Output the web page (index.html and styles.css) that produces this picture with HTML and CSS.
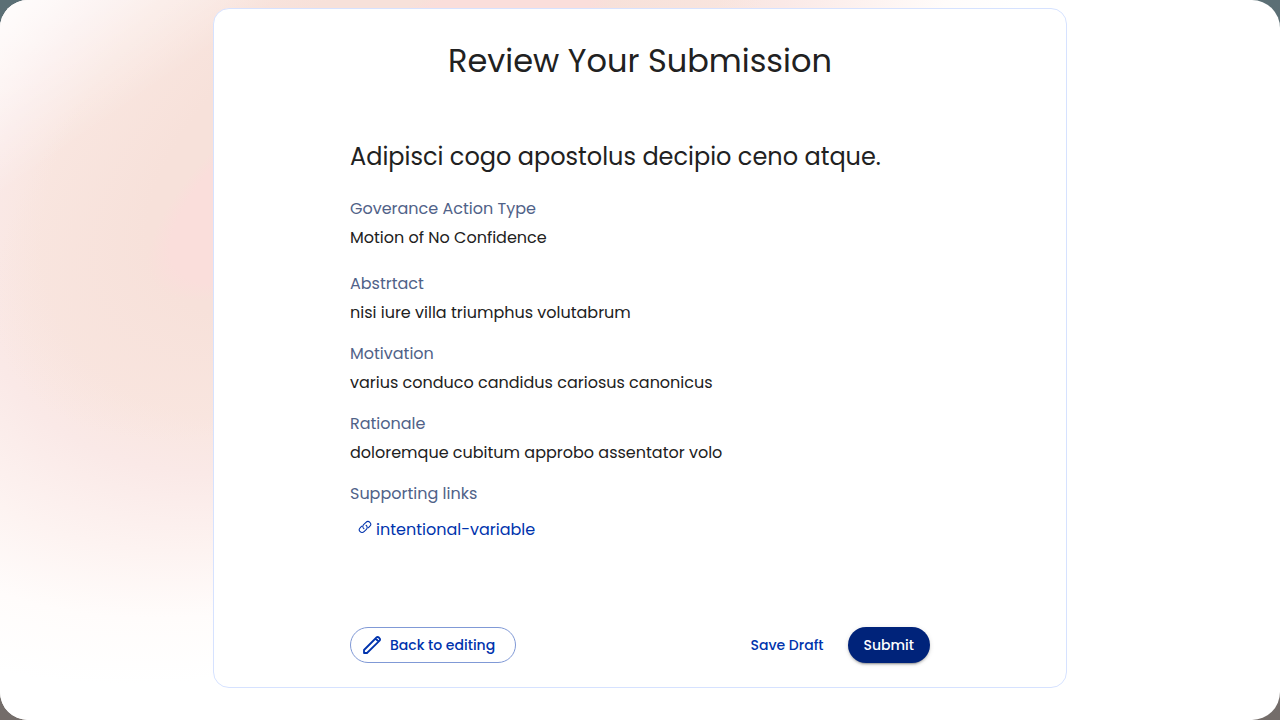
FILE: index.html
```html
<!DOCTYPE html>
<html lang="en">
<head>
<meta charset="utf-8">
<meta name="viewport" content="width=device-width, initial-scale=1">
<title>Review Your Submission</title>
<link rel="stylesheet" href="styles.css">
</head>
<body>
<div class="page">
  <main class="card">
    <h1 class="title">Review Your Submission</h1>
    <div class="content">
      <h2 class="subtitle">Adipisci cogo apostolus decipio ceno atque.</h2>
      <dl class="details">
        <div class="field field-type"><dt>Goverance Action Type</dt><dd>Motion of No Confidence</dd></div>
        <div class="field"><dt>Abstrtact</dt><dd>nisi iure villa triumphus volutabrum</dd></div>
        <div class="field"><dt>Motivation</dt><dd>varius conduco candidus cariosus canonicus</dd></div>
        <div class="field"><dt>Rationale</dt><dd>doloremque cubitum approbo assentator volo</dd></div>
        <div class="field"><dt>Supporting links</dt>
          <dd class="links"><a class="link" href="#"><svg class="link-icon" viewBox="0 0 16 16" aria-hidden="true"><path d="M6.800 10a3 3 0 0 1-.4-4.600l2.700-2.700a3.100 3.100 0 0 1 4.500 4.400l-1.800 1.800M9.200 6a3 3 0 0 1 .4 4.600l-2.700 2.700a3.100 3.100 0 0 1-4.500-4.400l1.800-1.800"/></svg><span>intentional-variable</span></a></dd>
        </div>
      </dl>
      <div class="actions">
        <button class="button outlined" type="button"><svg class="edit-icon" viewBox="0 0 20 20" aria-hidden="true"><path d="M2 18v-3L14.500 2.500a1.600 1.600 0 0 1 2.300 0l.8.8a1.600 1.600 0 0 1 0 2.300L5 18zM13.500 3.500l3 3"/></svg>Back to editing</button>
        <div class="actions-end">
          <button class="button text" type="button">Save Draft</button>
          <button class="button contained" type="submit">Submit</button>
        </div>
      </div>
    </div>
  </main>
</div>
</body>
</html>
```
FILE: styles.css
```css
* { box-sizing: border-box; }
body {
  margin: 0;
  font-family: Poppins, Inter, sans-serif;
  font-size: 16px;
  line-height: 24px;
  color: #212121;
  background: linear-gradient(#5b6f75, #746d6a);
}
.page {
  position: relative;
  overflow: hidden;
  min-height: 100vh;
  padding: 8px 0 32px;
  display: flex;
  justify-content: center;
  align-items: stretch;
  border-radius: 28px;
  background: #fff;
}
/* Tilted pink glow behind the card */
.page::before {
  content: "";
  position: absolute;
  left: -340px;
  top: -330px;
  width: 1440px;
  height: 920px;
  transform: rotate(-34deg);
  background:
    radial-gradient(ellipse 274px 92px at center, #fadedb 90%, rgba(250,222,219,0) 100%),
    radial-gradient(ellipse 440px 228px at center, #f7e1da 60%, rgba(248,225,219,0) 100%),
    radial-gradient(ellipse 720px 460px at center, #f9e6e0 52%, #fae9e7 62%, #fdf3f1 76%, #fffcfb 88%, #fff 100%);
}
/* Fades the glow out towards the top left corner */
.page::after {
  content: "";
  position: absolute;
  inset: 0;
  background: linear-gradient(145deg, rgba(255,255,255,.8), rgba(255,255,255,0) 160px);
}
.card {
  position: relative;
  z-index: 1;
  width: 66.6667%;
  padding: 28px 16px 24px;
  display: flex;
  flex-direction: column;
  align-items: center;
  background: #fff;
  border: 1px solid #d6e2ff;
  border-radius: 16px;
}
.title {
  margin: 0 0 56px;
  font-size: 32px;
  line-height: 48px;
  font-weight: 400;
  text-align: center;
}
.content {
  width: 100%;
  max-width: 580px;
  flex: 1;
  display: flex;
  flex-direction: column;
}
.subtitle {
  margin: 0 0 24px;
  font-size: 24px;
  line-height: 32px;
  font-weight: 400;
}
.details { margin: 0; display: flex; flex-direction: column; gap: 17px; }
.field { display: flex; flex-direction: column; gap: 5px; }
.field-type { margin-bottom: 5px; }
dt { color: #506288; }
dd { margin: 0; }
.links { padding: 6px 8px; }
.link { display: inline-flex; align-items: center; gap: 4px; color: #0033ad; text-decoration: none; }
.link-icon { width: 14px; height: 14px; margin-bottom: 6px; fill: none; stroke: currentColor; stroke-width: 1.2; stroke-linecap: round; }
.actions { margin-top: auto; display: flex; justify-content: space-between; flex-wrap: wrap; gap: 16px; }
.actions-end { display: flex; gap: 8px; }
.button {
  height: 36px;
  padding: 0 16px;
  display: flex;
  align-items: center;
  gap: 8px;
  font: inherit;
  font-size: 14px;
  font-weight: 500;
  color: #0033ad;
  background: transparent;
  border: 0;
  border-radius: 18px;
  cursor: pointer;
}
.outlined { padding: 0 20px 0 11px; border: 1px solid #8099d6; }
.edit-icon { width: 20px; height: 20px; fill: none; stroke: currentColor; stroke-width: 1.8; stroke-linejoin: round; }
.contained {
  color: #fff;
  background: #00237a;
  box-shadow: 0 3px 1px -2px rgba(0,0,0,.2), 0 2px 2px rgba(0,0,0,.14), 0 1px 5px rgba(0,0,0,.12);
}
```
